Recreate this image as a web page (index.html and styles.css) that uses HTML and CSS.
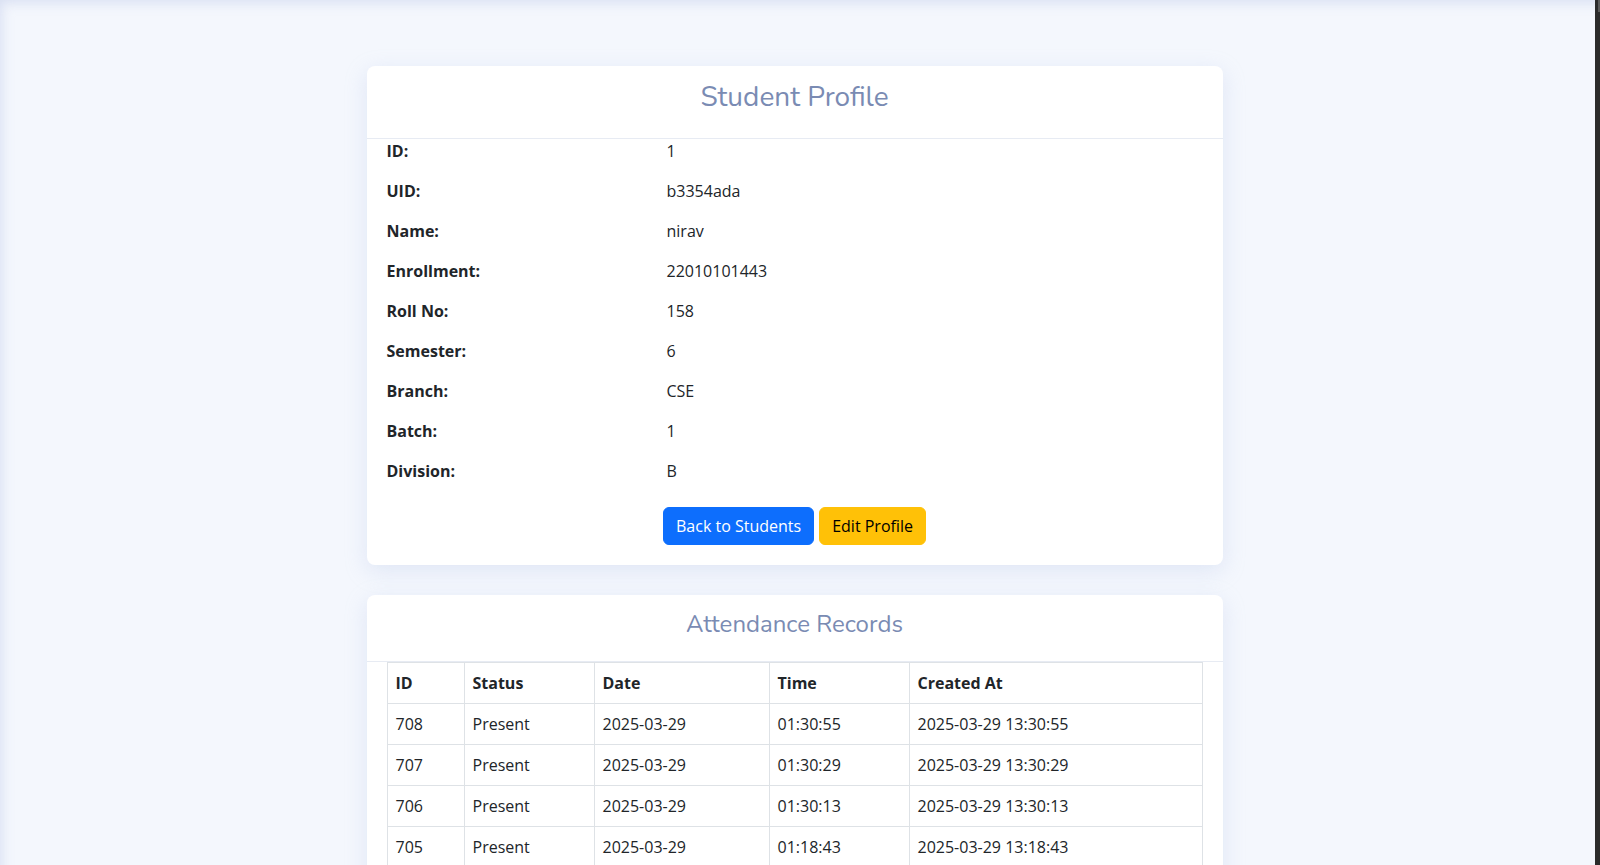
FILE: index.html
```html
<!DOCTYPE html>
<html lang="en">
<head>
<meta charset="utf-8">
<title>Student Profile</title>
<link rel="stylesheet" href="styles.css">
</head>
<body>
<div class="page">
  <section class="card">
    <div class="card-header">
      <h3 class="card-title">Student Profile</h3>
    </div>
    <div class="card-body profile">
      <div class="field"><span class="label">ID:</span><span class="value">1</span></div>
      <div class="field"><span class="label">UID:</span><span class="value">b3354ada</span></div>
      <div class="field"><span class="label">Name:</span><span class="value">nirav</span></div>
      <div class="field"><span class="label">Enrollment:</span><span class="value">22010101443</span></div>
      <div class="field"><span class="label">Roll No:</span><span class="value">158</span></div>
      <div class="field"><span class="label">Semester:</span><span class="value">6</span></div>
      <div class="field"><span class="label">Branch:</span><span class="value">CSE</span></div>
      <div class="field"><span class="label">Batch:</span><span class="value">1</span></div>
      <div class="field field-last"><span class="label">Division:</span><span class="value">B</span></div>
      <div class="actions">
        <a class="btn btn-primary" href="#">Back to Students</a>
        <a class="btn btn-warning" href="#">Edit Profile</a>
      </div>
    </div>
  </section>

  <section class="card card-records">
    <div class="card-header">
      <h4 class="card-title small">Attendance Records</h4>
    </div>
    <div class="card-body records">
      <table class="table">
        <thead>
          <tr>
            <th class="c-id">ID</th>
            <th class="c-status">Status</th>
            <th class="c-date">Date</th>
            <th class="c-time">Time</th>
            <th class="c-created">Created At</th>
          </tr>
        </thead>
        <tbody>
          <tr><td>708</td><td>Present</td><td>2025-03-29</td><td>01:30:55</td><td>2025-03-29 13:30:55</td></tr>
          <tr><td>707</td><td>Present</td><td>2025-03-29</td><td>01:30:29</td><td>2025-03-29 13:30:29</td></tr>
          <tr><td>706</td><td>Present</td><td>2025-03-29</td><td>01:30:13</td><td>2025-03-29 13:30:13</td></tr>
          <tr><td>705</td><td>Present</td><td>2025-03-29</td><td>01:18:43</td><td>2025-03-29 13:18:43</td></tr>
        </tbody>
      </table>
    </div>
  </section>
</div>
<div class="scrollbar"><div class="scrollbar-thumb"></div></div>
</body>
</html>
```

FILE: styles.css
```css
html {
  overflow: hidden;
  background: #f4f7fd;
}

body {
  margin: 0;
  min-height: 100vh;
  background: #f4f7fd;
  box-shadow: inset 6px 7px 12px -4px rgba(205, 214, 238, 0.7);
  font-family: "Open Sans", "Noto Sans", "Liberation Sans", sans-serif;
  font-size: 16px;
  line-height: 1.5;
  color: #212529;
  padding: 66px 11px 40px 0;
  box-sizing: border-box;
}

.page {
  width: 856px;
  margin: 0 auto;
  display: flex;
  flex-direction: column;
  gap: 30px;
}

.card {
  background: #ffffff;
  border-radius: 8px;
  box-shadow: 0 6px 22px rgba(170, 185, 225, 0.28);
}

.card-header {
  padding: 15px 20px;
  border-bottom: 1px solid #e7ebf3;
  text-align: center;
}

.card-title {
  margin: 0 0 8px;
  font-family: "Nunito", "Lato", "Noto Sans", sans-serif;
  font-weight: 400;
  font-size: 28px;
  line-height: 1.2;
  color: #7a8bb3;
}

.card-title.small {
  font-size: 24px;
}

.card-body {
  padding: 0 20px 20px;
}

.field {
  display: grid;
  grid-template-columns: 280px 1fr;
  margin-bottom: 16px;
  line-height: 24px;
}

.field.field-last {
  margin-bottom: 24px;
}

.label {
  font-weight: 700;
}

.actions {
  display: flex;
  justify-content: center;
  gap: 5px;
}

.btn {
  display: inline-block;
  padding: 6px 12px;
  border-radius: 6px;
  font-size: 16px;
  line-height: 24px;
  text-decoration: none;
  border: 1px solid transparent;
}

.btn-primary {
  background: #0d6efd;
  border-color: #0d6efd;
  color: #ffffff;
}

.btn-warning {
  background: #ffc107;
  border-color: #ffc107;
  color: #000000;
}

.records {
  padding-bottom: 20px;
}

.table {
  width: 100%;
  border-collapse: collapse;
  table-layout: fixed;
}

.table th,
.table td {
  box-sizing: border-box;
  border: 1px solid #dee2e6;
  padding: 8px;
  text-align: left;
  line-height: 24px;
  white-space: nowrap;
}

.table th {
  font-weight: 700;
}

.c-id { width: 77px; }
.c-status { width: 130px; }
.c-date { width: 175px; }
.c-time { width: 140px; }

.scrollbar {
  position: fixed;
  top: 0;
  right: 0;
  width: 5px;
  height: 100vh;
  background: #2b2b2b;
}

.scrollbar-thumb {
  margin-left: 3px;
  width: 2px;
  height: 12px;
  background: #5a5a5a;
}
```
